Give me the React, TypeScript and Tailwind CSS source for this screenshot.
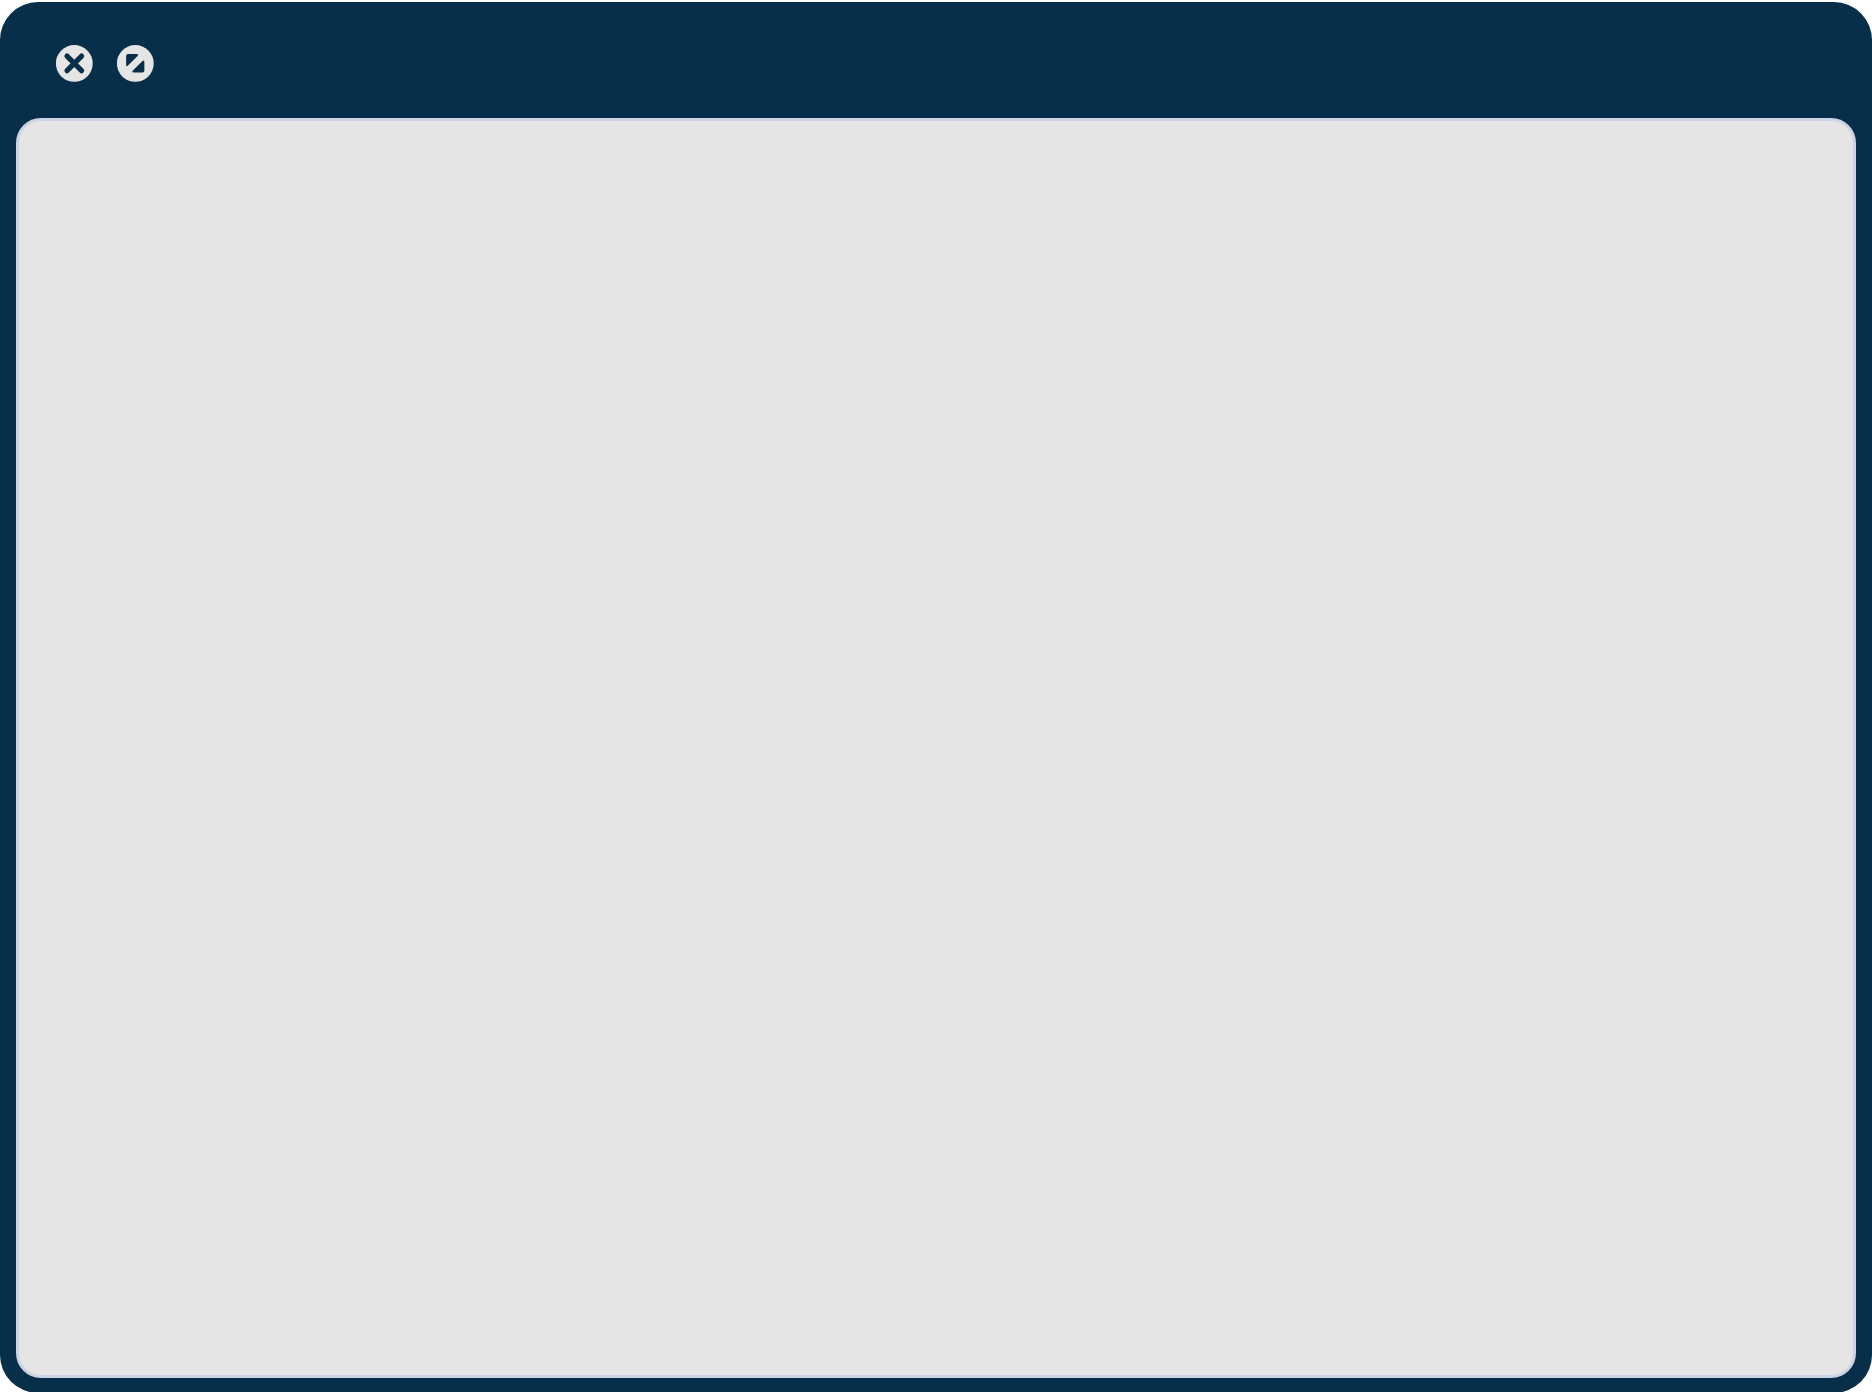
function CloseIcon() {
  return (
    <svg viewBox="0 0 37 37" className="size-[37px]" aria-hidden="true">
      <circle cx="18.3" cy="18.4" r="18.4" fill="#e5e5e5" />
      <path d="M11 11.1 L25.6 25.7 M25.6 11.1 L11 25.7" stroke="#082f49" strokeWidth="5.2" strokeLinecap="round" />
    </svg>
  )
}

function ResizeIcon() {
  return (
    <svg viewBox="0 0 37 37" className="size-[37px]" aria-hidden="true">
      <circle cx="18.3" cy="18.4" r="18.4" fill="#e5e5e5" />
      <path
        d="M11.1 9.1 H19.6 Q22.2 9.2 20.6 11 L11 20.6 Q9.2 22.2 9.1 19.6 V11.1 Q9.1 9.1 11.1 9.1 Z"
        fill="#082f49"
      />
      <path
        d="M25.4 27.5 H16.9 Q14.3 27.4 15.9 25.6 L25.5 16 Q27.3 14.4 27.4 17 V25.5 Q27.4 27.5 25.4 27.5 Z"
        fill="#082f49"
      />
    </svg>
  )
}

export default function App() {
  return (
    <div className="flex h-screen flex-col overflow-hidden bg-white pt-0.5">
      <div className="-mb-px flex flex-1 flex-col rounded-[38px] bg-[#082f49] px-4 pb-[15px]">
        <header className="flex h-[116px] shrink-0 items-start gap-6 px-10 pt-[43px]">
          <button type="button" aria-label="Close" className="rounded-full">
            <CloseIcon />
          </button>
          <button type="button" aria-label="Resize" className="rounded-full">
            <ResizeIcon />
          </button>
        </header>
        <main className="flex-1 rounded-[25px] border-3 border-[#ccd4e4] bg-[#e5e5e5]" />
      </div>
    </div>
  )
}
